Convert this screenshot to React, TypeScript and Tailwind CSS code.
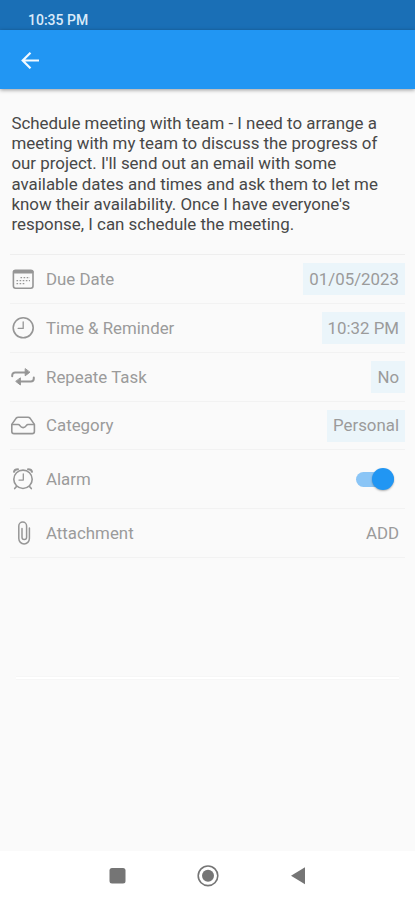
import React from "react";

const note = [
  "Schedule meeting with team - I need to arrange a",
  "meeting with my team to discuss the progress of",
  "our project. I'll send out an email with some",
  "available dates and times and ask them to let me",
  "know their availability. Once I have everyone's",
  "response, I can schedule the meeting.",
];

function Icon({ children }: { children: React.ReactNode }) {
  return (
    <svg width="26" height="26" viewBox="0 0 26 26" fill="none" stroke="#969696" strokeWidth="1.6" strokeLinecap="round" strokeLinejoin="round" className="shrink-0">
      {children}
    </svg>
  );
}

function CalendarIcon() {
  return (
    <Icon>
      <rect x="3.4" y="4.4" width="19.6" height="17.8" rx="2.2" />
      <path d="M4.4 5.8h17.6" strokeWidth="3.2" />
      <path d="M10.5 11.6H20M6.5 14.6H20M6.5 17.6h9" strokeWidth="1.4" strokeDasharray="1.6 1.5" strokeLinecap="butt" />
    </Icon>
  );
}

function ClockIcon() {
  return (
    <Icon>
      <circle cx="13.2" cy="12.8" r="10" />
      <path d="M13.2 6.8V13.4H8.2" strokeWidth="1.3" />
    </Icon>
  );
}

function RepeatIcon() {
  return (
    <Icon>
      <path d="M2.2 12.2V11.4a3 3 0 0 1 3-3H17M23.8 13.4V14.6a3 3 0 0 1-3 3H8" strokeWidth="2" />
      <path d="M15.2 5v6.8L19.6 8.4ZM10.4 14.2v6.8L6 17.6Z" fill="#949494" strokeWidth="1" />
    </Icon>
  );
}

function TrayIcon() {
  return (
    <Icon>
      <path d="M1.8 11.4 6.2 5.1Q7 4.2 8.2 4.2h9.8Q19.2 4.2 20 5.1l4.4 6.3v7a2.2 2.2 0 0 1-2.2 2.2H4a2.2 2.2 0 0 1-2.2-2.2Z" />
      <path d="M2 11.5h6.3c.9 0 1.1.4 1.6 1.1.9 1.3 1.8 2 3.2 2s2.3-.7 3.2-2c.5-.7.7-1.1 1.6-1.1h6.3" />
    </Icon>
  );
}

function AlarmIcon() {
  return (
    <Icon>
      <circle cx="13" cy="13.3" r="9.2" />
      <path d="M13.3 8v6.1H9" strokeWidth="1.3" />
      <path d="M4 5.8Q4.4 3.2 8 3.2M22 5.8Q21.6 3.2 18 3.2" strokeWidth="2" />
      <path d="m6.5 20.4-1.8 2.2M19.5 20.4l1.8 2.2" />
    </Icon>
  );
}

function ClipIcon() {
  return (
    <Icon>
      <path d="M19.4 8V18.6a5.3 5.3 0 0 1-10.6 0V6a3.9 3.9 0 0 1 7.8 0V17.2a2.3 2.3 0 0 1-4.6 0V8.4" strokeWidth="1.5" />
    </Icon>
  );
}

interface RowProps {
  icon: React.ReactNode;
  label: string;
  height: string;
  children: React.ReactNode;
}

function Row({ icon, label, height, children }: RowProps) {
  return (
    <div className={`flex items-center border-b border-[#f2f2f2] ${height}`}>
      {icon}
      <span className="ml-[10px] grow pt-px text-[16.85px]">{label}</span>
      {children}
    </div>
  );
}

function Chip({ children }: { children: React.ReactNode }) {
  return (
    <span className="flex h-[32px] items-center bg-[#ebf5fa] px-[6px] pt-px text-[16.85px]">
      {children}
    </span>
  );
}

export default function App() {
  return (
    <div className="flex h-[900px] w-[415px] flex-col overflow-hidden bg-[#fafafa] font-['Roboto',sans-serif]">
      <div className="flex h-[30px] shrink-0 items-end bg-[#1a6fb6] pl-7 text-[14px] font-medium leading-[20px] text-[#d9eafa]">
        10:35 PM
      </div>
      <header className="z-10 flex h-[59px] shrink-0 items-center bg-[#2196f3] pl-[21px] shadow-[0_1px_4px_rgba(0,0,0,0.4)]">
        <svg width="19" height="18" viewBox="0 0 19 18" fill="none" stroke="#f2f9ff" strokeWidth="2.2">
          <path d="M18 9.5H2M9.5 1.7 1.7 9.5l7.8 7.8" />
        </svg>
      </header>

      <p className="mt-[24px] h-[141px] shrink-0 pl-[11.4px] text-[16.9px] leading-[20.2px] text-[#484848]">
        {note.map((line) => (
          <span key={line} className="block whitespace-nowrap">{line}</span>
        ))}
      </p>

      <section className="mx-[10px] border-t border-[#eeeeee] text-[#9b9b9b]">
        <Row icon={<CalendarIcon />} label="Due Date" height="h-[49px]"><Chip>01/05/2023</Chip></Row>
        <Row icon={<ClockIcon />} label="Time & Reminder" height="h-[49px]"><Chip>10:32 PM</Chip></Row>
        <Row icon={<RepeatIcon />} label="Repeate Task" height="h-[49px]"><Chip>No</Chip></Row>
        <Row icon={<TrayIcon />} label="Category" height="h-[48px]"><Chip>Personal</Chip></Row>
        <Row icon={<AlarmIcon />} label="Alarm" height="h-[59px]">
          <span className="mr-[11px] flex h-[15px] w-[38px] items-center justify-end rounded-full bg-[#8ac5f6]">
            <span className="size-[22px] shrink-0 rounded-full bg-[#2196f3] shadow-[0_1px_2px_rgba(0,0,0,0.3)]" />
          </span>
        </Row>
        <Row icon={<ClipIcon />} label="Attachment" height="h-[49px]">
          <span className="mr-[6px] pt-px text-[16.85px]">ADD</span>
        </Row>
      </section>

      <div className="mx-4 mt-[118px] h-[4px] shrink-0 border-y border-[#f6f6f6] bg-white" />

      <nav className="mt-auto flex h-[49px] shrink-0 items-center justify-center bg-white">
        <svg width="200" height="24" viewBox="0 0 200 24" fill="#757575">
          <rect x="1.5" y="4" width="16" height="15.5" rx="2.5" />
          <circle cx="100" cy="11.8" r="9.8" fill="none" stroke="#757575" strokeWidth="1.6" />
          <circle cx="100" cy="11.8" r="6" />
          <path d="M183 11.7 197 3.2v17Z" />
        </svg>
      </nav>
    </div>
  );
}
